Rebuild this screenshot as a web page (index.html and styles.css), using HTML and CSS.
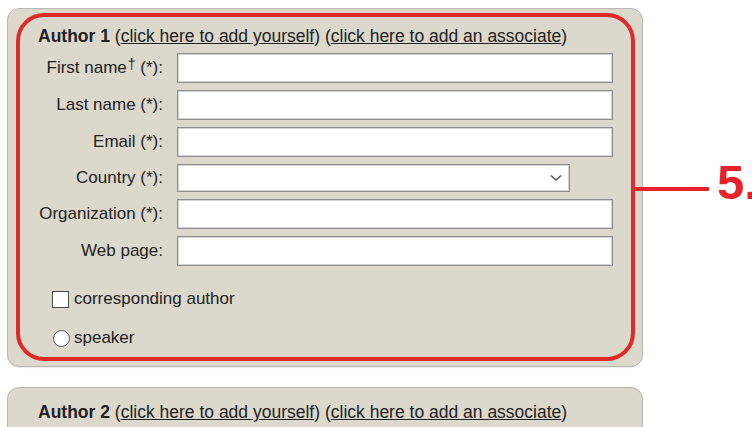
FILE: index.html
```html
<!DOCTYPE html>
<html lang="en">
<head>
<meta charset="utf-8">
<title>Authors</title>
<link rel="stylesheet" href="styles.css">
</head>
<body>
<div class="page">
  <section class="author-box">
    <div class="author-head"><b>Author 1</b> (<a href="#">click here to add yourself</a>) (<a href="#">click here to add an associate</a>)</div>
    <div class="fields">
      <label class="lbl">First name<sup>†</sup> (*):</label><input class="txt" type="text">
      <label class="lbl">Last name (*):</label><input class="txt" type="text">
      <label class="lbl">Email (*):</label><input class="txt" type="text">
      <label class="lbl">Country (*):</label>
      <div class="sel-wrap">
        <select class="sel"><option></option></select>
        <svg class="chev" width="12" height="8" viewBox="0 0 12 8"><path d="M1 1.5 L6 6 L11 1.5" fill="none" stroke="#555" stroke-width="1.6"/></svg>
      </div>
      <label class="lbl">Organization (*):</label><input class="txt" type="text">
      <label class="lbl">Web page:</label><input class="txt" type="text">
    </div>
    <div class="opts">
      <label class="opt"><input type="checkbox" class="chk">corresponding author</label>
      <label class="opt"><input type="radio" class="rad">speaker</label>
    </div>
  </section>

  <section class="author-box second">
    <div class="author-head"><b>Author 2</b> (<a href="#">click here to add yourself</a>) (<a href="#">click here to add an associate</a>)</div>
  </section>

  <div class="callout-box"></div>
  <div class="callout-line"></div>
  <div class="callout-num">5.</div>
</div>
</body>
</html>
```
FILE: styles.css
```css
html, body {
  margin: 0;
  background: #fff;
  overflow: hidden;
}

body {
  font-family: "Liberation Sans", Arial, sans-serif;
  font-size: 17px;
  color: #222;
}

.page {
  position: relative;
  padding: 8px 0 0 7px;
  width: 745px;
  height: 419px;
}

.author-box {
  width: 636px;
  height: 359px;
  box-sizing: border-box;
  background: #dcd8cc;
  border: 1px solid #b9b7b0;
  border-radius: 12px;
  padding: 17px 0 0 30px;
  box-shadow: 0 1px 1px rgba(0,0,0,0.08);
}

.author-box.second {
  margin-top: 20px;
  height: 60px;
  padding-top: 14px;
}

.author-head {
  font-size: 17.5px;
  line-height: 20px;
  height: 20px;
  white-space: nowrap;
}

.author-head a {
  color: #222;
  text-decoration: underline;
}

.fields {
  display: grid;
  grid-template-columns: 125px 436px;
  column-gap: 14px;
  row-gap: 7px;
  margin-top: 7px;
  align-items: center;
}

.lbl {
  text-align: right;
  white-space: nowrap;
}

.lbl sup {
  font-size: 14px;
  vertical-align: 4px;
  line-height: 0;
  margin-left: 1px;
}

.txt {
  height: 30px;
  box-sizing: border-box;
  margin: 0;
  background: #fff;
  border: 1px solid #8e8e8e;
  box-shadow: inset 0 0 0 1px #d2d2d2;
  border-radius: 0;
  padding: 0 4px;
}

.sel-wrap {
  position: relative;
  width: 393px;
  height: 28px;
}

.sel {
  appearance: none;
  -webkit-appearance: none;
  width: 393px;
  height: 28px;
  margin: 0;
  box-sizing: border-box;
  background: #fff;
  border: 1px solid #8e8e8e;
  box-shadow: inset 0 0 0 1px #d2d2d2;
  border-radius: 0;
}

.chev {
  position: absolute;
  right: 8px;
  top: 10px;
}

.opts {
  display: flex;
  flex-direction: column;
  margin-top: 24px;
  margin-left: 14px;
  row-gap: 21px;
}

.opt {
  display: flex;
  align-items: center;
  height: 18px;
  line-height: 18px;
}

.chk {
  appearance: none;
  -webkit-appearance: none;
  width: 17px;
  height: 17px;
  margin: 0 5px 0 0;
  box-sizing: border-box;
  background: #fff;
  border: 1px solid #4a4a4a;
  border-radius: 0;
}

.rad {
  appearance: none;
  -webkit-appearance: none;
  width: 17px;
  height: 17px;
  margin: 0 4px 0 1px;
  box-sizing: border-box;
  background: radial-gradient(circle at 50% 55%, #fff 55%, #e6e6e6 100%);
  border: 1px solid #555;
  border-radius: 50%;
}

/* red highlight drawn over the first author block */
.callout-box {
  position: absolute;
  left: 16px;
  top: 13px;
  width: 619px;
  height: 348px;
  box-sizing: border-box;
  border: 4px solid #e02a2a;
  border-radius: 28px;
}

.callout-line {
  position: absolute;
  left: 635px;
  top: 187px;
  width: 74px;
  height: 4px;
  background: #e8222b;
}

.callout-num {
  position: absolute;
  left: 717px;
  top: 156px;
  font-family: "Liberation Sans", Arial, sans-serif;
  font-weight: bold;
  font-size: 49px;
  line-height: 52px;
  color: #e8222b;
  white-space: nowrap;
}
```
